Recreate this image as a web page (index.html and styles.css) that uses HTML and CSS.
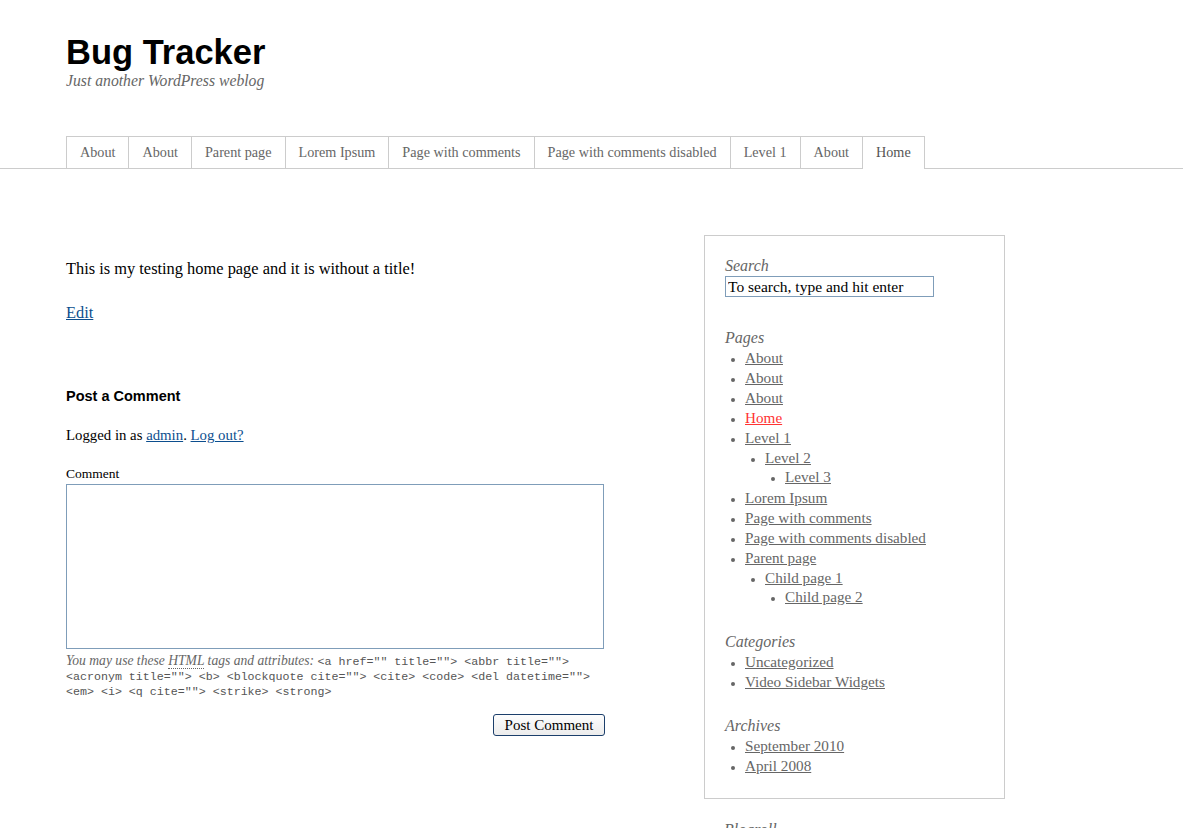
FILE: index.html
```html
<!DOCTYPE html>
<html>
<head>
<meta charset="utf-8">
<title>Bug Tracker</title>
<link rel="stylesheet" href="styles.css">
</head>
<body>
<header class="header">
  <h1 class="site-title">Bug Tracker</h1>
  <p class="tagline">Just another WordPress weblog</p>
</header>
<nav class="nav">
  <ul class="tabs">
    <li class="tab">About</li>
    <li class="tab">About</li>
    <li class="tab">Parent page</li>
    <li class="tab">Lorem Ipsum</li>
    <li class="tab">Page with comments</li>
    <li class="tab">Page with comments disabled</li>
    <li class="tab">Level 1</li>
    <li class="tab">About</li>
    <li class="tab tab-current">Home</li>
  </ul>
</nav>
<div class="wrap">
  <main class="main">
    <p class="intro">This is my testing home page and it is without a title!</p>
    <p class="edit"><a href="#">Edit</a></p>
    <h3 class="reply-title">Post a Comment</h3>
    <p class="logged">Logged in as <a href="#">admin</a>. <a href="#">Log out?</a></p>
    <label class="label">Comment</label>
    <textarea class="comment-box"></textarea>
    <p class="allowed">You may use these <abbr class="abbr">HTML</abbr> tags and attributes: <code class="code">&lt;a href="" title=""&gt; &lt;abbr title=""&gt; &lt;acronym title=""&gt; &lt;b&gt; &lt;blockquote cite=""&gt; &lt;cite&gt; &lt;code&gt; &lt;del datetime=""&gt; &lt;em&gt; &lt;i&gt; &lt;q cite=""&gt; &lt;strike&gt; &lt;strong&gt;</code></p>
    <div class="submit-row"><button class="submit">Post Comment</button></div>
  </main>
  <aside class="sidebar">
    <div class="widget widget-search">
      <h4 class="widget-title">Search</h4>
      <input class="search" type="text" value="To search, type and hit enter">
    </div>
    <div class="widget">
      <h4 class="widget-title">Pages</h4>
      <ul class="list">
        <li><a href="#">About</a></li>
        <li><a href="#">About</a></li>
        <li><a href="#">About</a></li>
        <li><a href="#" class="current">Home</a></li>
        <li><a href="#">Level 1</a>
          <ul class="list sub">
            <li><a href="#">Level 2</a>
              <ul class="list sub sub2">
                <li><a href="#">Level 3</a></li>
              </ul>
            </li>
          </ul>
        </li>
        <li><a href="#">Lorem Ipsum</a></li>
        <li><a href="#">Page with comments</a></li>
        <li><a href="#">Page with comments disabled</a></li>
        <li><a href="#">Parent page</a>
          <ul class="list sub">
            <li><a href="#">Child page 1</a>
              <ul class="list sub sub2">
                <li><a href="#">Child page 2</a></li>
              </ul>
            </li>
          </ul>
        </li>
      </ul>
    </div>
    <div class="widget">
      <h4 class="widget-title">Categories</h4>
      <ul class="list">
        <li><a href="#">Uncategorized</a></li>
        <li><a href="#">Video Sidebar Widgets</a></li>
      </ul>
    </div>
    <div class="widget">
      <h4 class="widget-title">Archives</h4>
      <ul class="list">
        <li><a href="#">September 2010</a></li>
        <li><a href="#">April 2008</a></li>
      </ul>
    </div>
  </aside>
</div>
<div class="wrap after">
  <div class="main"></div>
  <div class="after-side"><h4 class="widget-title">Blogroll</h4></div>
</div>
</body>
</html>
```

FILE: styles.css
```css
html, body {
  margin: 0;
  padding: 0;
  background: #fff;
}
body {
  font-family: "Liberation Serif", "DejaVu Serif", serif;
  color: #000;
  font-size: 16px;
  overflow: hidden;
}
.header {
  padding: 32px 0 0 66px;
  height: 107px;
  box-sizing: border-box;
}
.site-title {
  margin: 0;
  font-family: "Liberation Sans", Arial, sans-serif;
  font-size: 34.5px;
  line-height: 40px;
  font-weight: bold;
  color: #000;
}
.tagline {
  margin: 0;
  font-style: italic;
  font-size: 15.7px;
  line-height: 18px;
  color: #666;
}
.nav {
  border-bottom: 1px solid #ccc;
  height: 32px;
  margin-top: 29px;
}
.tabs {
  list-style: none;
  margin: 0 0 0 66px;
  padding: 0;
  display: flex;
}
.tab {
  height: 31px;
  line-height: 31px;
  border: 1px solid #ccc;
  border-bottom: none;
  border-left: none;
  padding: 0 13px;
  font-size: 14.2px;
  color: #666;
  background: #fff;
}
.tab:first-child {
  border-left: 1px solid #ccc;
}
.tab-current {
  height: 32px;
  color: #555;
}
.wrap {
  display: flex;
  gap: 100px;
  padding-left: 66px;
}
.main {
  width: 538px;
  padding-top: 91px;
}
.intro {
  margin: 0;
  font-size: 16.4px;
  line-height: 18px;
}
.edit {
  margin: 26px 0 0;
  font-size: 16.4px;
  line-height: 18px;
}
a {
  color: #0c4e8e;
}
.reply-title {
  margin: 65px 0 0;
  font-family: "Liberation Sans", Arial, sans-serif;
  font-size: 14.5px;
  line-height: 18px;
}
.logged {
  margin: 21px 0 0;
  font-size: 14.8px;
  line-height: 18px;
}
.label {
  display: block;
  margin-top: 23px;
  font-size: 13.5px;
  line-height: 14px;
}
.comment-box {
  display: block;
  margin-top: 3px;
  width: 538px;
  height: 165px;
  box-sizing: border-box;
  border: 1px solid #7f9db9;
  resize: none;
}
.allowed {
  margin: 4px 0 0;
  font-size: 13.6px;
  line-height: 15px;
  font-style: italic;
  color: #666;
}
.abbr {
  text-decoration: none;
  border-bottom: 1px dotted #666;
}
.code {
  font-family: "Liberation Mono", monospace;
  font-size: 11.65px;
  line-height: 11px;
  font-style: normal;
  color: #555;
}
.submit-row {
  display: flex;
  justify-content: flex-end;
  margin-top: 16px;
}
.submit {
  font-family: "Liberation Serif", serif;
  font-size: 15px;
  height: 22px;
  padding: 0 8px;
  width: 112px;
  margin-right: -1px;
  border: 1px solid #1c3f6b;
  border-radius: 3px;
  background: linear-gradient(#fdfdfd, #ececec);
  color: #000;
}
.sidebar {
  width: 301px;
  box-sizing: border-box;
  margin-top: 66px;
  border: 1px solid #ccc;
  padding: 20px 20px 22px 20px;
  height: 564px;
}
.widget {
  margin-bottom: 24px;
}
.widget-search {
  margin-bottom: 31px;
}
.widget-title {
  margin: 0;
  font-weight: normal;
  font-style: italic;
  font-size: 16px;
  line-height: 20px;
  color: #666;
}
.search {
  display: block;
  margin-top: 0;
  width: 209px;
  height: 21px;
  box-sizing: border-box;
  border: 1px solid #7f9db9;
  padding: 0 2px;
  font-family: "Liberation Serif", serif;
  font-size: 15.5px;
  color: #000;
}
.list {
  margin: 0;
  padding-left: 20px;
  font-size: 15.2px;
  line-height: 20px;
  color: #666;
  list-style: disc;
}
.list li::marker {
  font-size: 12px;
}
.list a {
  color: #666;
}
.list a.current {
  color: #f33;
}
.list.sub {
  line-height: 19px;
  list-style: disc;
}
.sub2 {
  padding-bottom: 2px;
}
.after {
  padding-top: 21px;
}
.after .main {
  padding-top: 0;
}
.after-side {
  padding-left: 20px;
}
```
